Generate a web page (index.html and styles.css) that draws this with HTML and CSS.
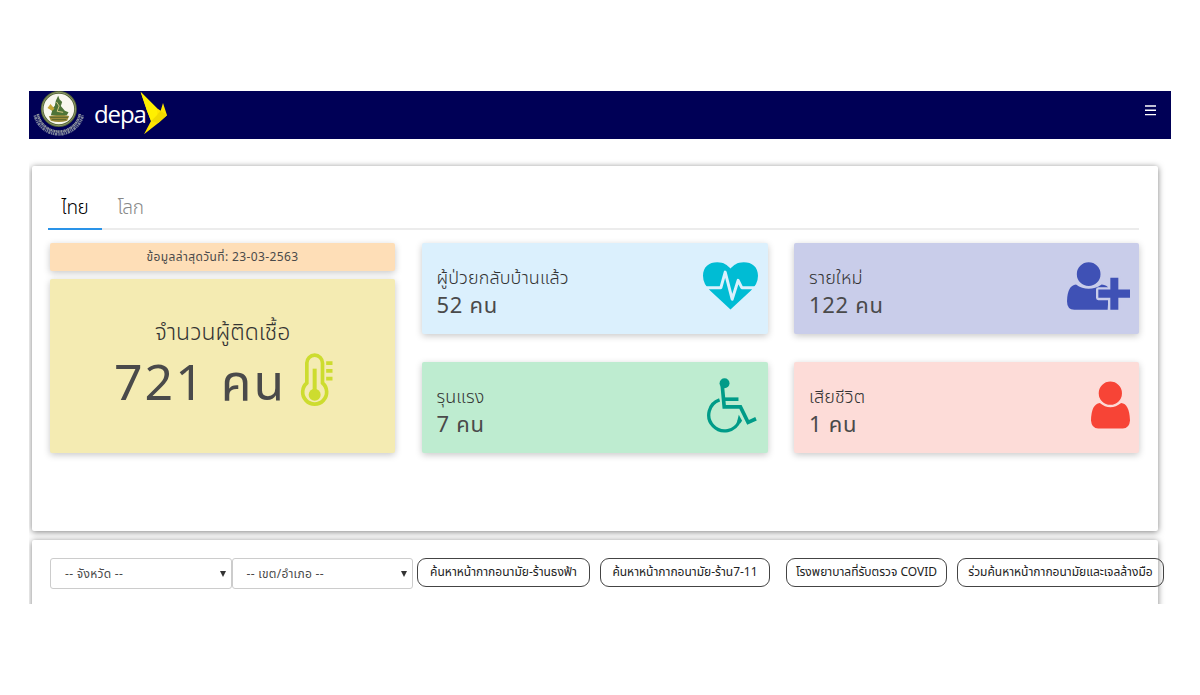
FILE: index.html
```
<!DOCTYPE html>
<html lang="th">
<head>
<meta charset="utf-8">
<title>depa</title>
<link rel="stylesheet" href="styles.css">
</head>
<body>
<div class="screen">
  <header class="topbar">
    <svg class="seal" viewBox="36 33 158 138">
      <path d="M44 106A74 74 0 0 0 188 106" fill="none" stroke="#7d859c" stroke-width="8" stroke-dasharray="4 2 7 2 3 2"/>
      <path d="M53 102A64 64 0 0 0 179 102" fill="none" stroke="#8f969d" stroke-width="8" stroke-dasharray="5 1.500 3 1"/>
      <circle cx="116" cy="87" r="50" fill="#f8f7ee" stroke="#566538" stroke-width="8"/>
      <circle cx="116" cy="87" r="50" fill="none" stroke="#a9b384" stroke-width="2"/>
      <path d="M86 109Q115 100 147 108L141 122Q116 130 92 122Z" fill="#9c8c3b"/>
      <path d="M114 47L118 58 126 66 122 78 134 92 145 97 140 106H92L96 92 84 82 98 84 104 77 107 62Z" fill="#4e7438"/>
      <path d="M82 84L91 72 103 86 96 92Z" fill="#c4a635"/>
      <path d="M109 66L117 78 111 94 129 97" fill="none" stroke="#d4ca83" stroke-width="3"/>
      <path d="M90 112H144M95 119H138" stroke="#59662e" stroke-width="3"/>
    </svg>
    <span class="brand">depa</span>
    <svg class="bird" viewBox="358 33 84 132">
      <path d="M360 36L408 84 420 92 427 69 439 106 413 129 370 163 391 123 379 92Z" fill="#ffe500"/>
      <path d="M391 123L420 92 439 106 413 129Z" fill="#f0da00"/>
      <path d="M360 36L408 84 410 104 391 123 379 92Z" fill="#fff000"/>
    </svg>
    <svg class="menu" viewBox="0 0 11 11"><path d="M0 1H11M0 5.3H11M0 9.6H11" stroke="#fff" stroke-width="1.4"/></svg>
  </header>

  <main>
    <section class="panel stats">
      <nav class="tabs">
        <a class="tab active"><span>ไทย</span></a>
        <a class="tab"><span>โลก</span></a>
      </nav>
      <div class="grid">
        <div class="total-col">
          <div class="card date">ข้อมูลล่าสุดวันที่: 23-03-2563</div>
          <div class="card total">
            <div class="total-label">จำนวนผู้ติดเชื้อ</div>
            <div class="total-row">
              <span>721 คน</span>
              <svg class="thermo" viewBox="780 160 98 168" fill="none" stroke="#cddc2f">
                <path d="M800 250V190A23.500 23.500 0 0 1 847 190V250A36 36 0 1 1 800 250Z" stroke-width="11"/>
                <path d="M823.500 207V285" stroke-width="12"/>
                <circle cx="823.500" cy="285" r="18" fill="#cddc2f" stroke="none"/>
                <path d="M858 190.500H877M858 213.500H877M858 237H877" stroke-width="11"/>
              </svg>
            </div>
          </div>
        </div>
        <div class="card home">
          <div class="info"><div class="name">ผู้ป่วยกลับบ้านแล้ว</div><div class="count">52 คน</div></div>
          <svg class="i-heart" viewBox="878 82 166 144">
            <path d="M961 225L900 168Q878 148 878 123C878 96 896 82 921 82C942 82 951 91 961 101C971 91 980 82 1001 82C1026 82 1044 96 1044 123Q1044 148 1022 168Z" fill="#00bcd4"/>
            <path d="M878 159H932L945 112 966 194 984 137 995 159H1044" fill="none" stroke="#dbf0fd" stroke-width="9" stroke-linejoin="round"/>
          </svg>
        </div>
        <div class="card new">
          <div class="info"><div class="name">รายใหม่</div><div class="count">122 คน</div></div>
          <svg class="i-plus" viewBox="846 82 189 143">
            <path d="M873 149Q891 162 911 162T950 149Q966 150 972 162L968 225H868Q846 224 846 199Q847 152 873 149Z" fill="#3f51b5"/>
            <circle cx="911" cy="118" r="38" fill="#3f51b5" stroke="#c9cdea" stroke-width="5"/>
            <path d="M976 129H1000V164H1035V189H1000V225H976V189H940V164H976Z" fill="#3f51b5" stroke="#c9cdea" stroke-width="14" stroke-linejoin="round"/>
            <path d="M976 129H1000V164H1035V189H1000V225H976V189H940V164H976Z" fill="#3f51b5"/>
          </svg>
        </div>
        <div class="card severe">
          <div class="info"><div class="name">รุนแรง</div><div class="count">7 คน</div></div>
          <svg class="i-wheel" viewBox="890 84 151 164">
            <circle cx="943" cy="99" r="15" fill="#009b88"/>
            <path d="M936 105L942 170H991L1014 217 1038 206" fill="none" stroke="#009b88" stroke-width="11"/>
            <path d="M942 147H985" stroke="#009b88" stroke-width="11"/>
            <path d="M928 149A48 48 0 1 0 988 212" fill="none" stroke="#009b88" stroke-width="10"/>
            <path d="M986 194L996 212 990 220 981 214Z" fill="#009b88"/>
          </svg>
        </div>
        <div class="card death">
          <div class="info"><div class="name">เสียชีวิต</div><div class="count">1 คน</div></div>
          <svg class="i-user" viewBox="917 93 119 144">
            <path d="M944 159Q959 172 976 172T1009 159Q1034 161 1036 212Q1034 236 1014 237H939Q919 236 917 212Q918 162 944 159Z" fill="#f74436"/>
            <circle cx="976" cy="129" r="37.500" fill="#f74436" stroke="#fddcd8" stroke-width="4"/>
          </svg>
        </div>
      </div>
    </section>

    <section class="panel filters">
      <div class="select"><span>-- จังหวัด --</span><i class="caret"></i></div>
      <div class="select"><span>-- เขต/อำเภอ --</span><i class="caret"></i></div>
      <a class="btn b1">ค้นหาหน้ากากอนามัย-ร้านธงฟ้า</a>
      <a class="btn b2">ค้นหาหน้ากากอนามัย-ร้าน7-11</a>
      <a class="btn b3">โรงพยาบาลที่รับตรวจ COVID</a>
      <a class="btn b4">ร่วมค้นหาหน้ากากอนามัยและเจลล้างมือ</a>
    </section>
  </main>
</div>
</body>
</html>
```
FILE: styles.css
```
* { box-sizing: border-box; }
body {
  margin: 0;
  padding: 91px 29px 0;
  background: #fff;
  font-family: "Noto Sans", "Noto Sans Thai", sans-serif;
  color: #4a4a4a;
}
.screen { height: 513px; overflow: hidden; }
.topbar { display: flex; height: 48px; background: #000056; }
.seal { width: 53px; height: 46px; margin-left: 3px; }
.brand {
  width: 52px;
  margin-left: 9px;
  font: 400 24px/46px "Open Sans", sans-serif;
  letter-spacing: -1.1px;
  color: #fff;
}
.bird { width: 28px; height: 44px; margin-left: -6px; }
.menu { width: 11px; height: 11px; margin: 14px 15px 0 auto; }
main { display: flex; flex-direction: column; gap: 9px; padding: 27px 13px 0 3px; }
.panel { background: #fff; border-radius: 2px; box-shadow: 0 1px 6px rgba(0,0,0,.5); }
.stats { height: 365px; padding: 20px 19px 0 18px; }
.tabs { display: flex; height: 44px; margin-left: -2px; border-bottom: 2px solid #ececec; }
.tab { display: flex; justify-content: center; width: 54px; height: 44px; font-size: 19px; font-weight: 300; line-height: 43px; letter-spacing: -.4px; color: #888; }
.tab + .tab { width: 57px; }
.tab.active { color: #000; border-bottom: 2px solid #2a93e8; }
.grid {
  display: grid;
  grid-template-columns: 345px 346px 345px;
  grid-template-rows: 91px 91px;
  gap: 28px 26.500px;
  margin-top: 13px;
}
.total-col { grid-row: 1 / 3; display: flex; flex-direction: column; gap: 8px; }
.card { border-radius: 2px; box-shadow: 0 2px 7px rgba(0,0,0,.22); white-space: nowrap; }
.date { height: 28px; background: #fedeb7; text-align: center; font-size: 12px; line-height: 27px; letter-spacing: .38px; }
.total { flex: 1; padding-top: 35px; background: #f4ebb2; text-align: center; }
.total-label { font-size: 23px; font-weight: 300; line-height: 34px; color: #333; }
.total-row { display: flex; align-items: flex-start; gap: 14px; padding-left: 64px; font-size: 50px; line-height: 67px; letter-spacing: 2px; }
.thermo { width: 33px; height: 56px; margin-top: 5px; }
.home, .new, .severe, .death { display: flex; justify-content: space-between; padding-left: 15px; }
.home { background: #dbf0fd; }
.new { background: #c9cdea; }
.severe { background: #beecd0; }
.death { background: #fddcd8; }
.info { padding-top: 21px; }
.name { font-size: 18px; font-weight: 300; line-height: 27px; letter-spacing: .1px; color: #333; }
.count { font-size: 22px; line-height: 26px; letter-spacing: .7px; }
.i-heart { width: 55px; height: 48px; margin: 19px 10px 0 0; }
.i-plus { width: 63px; height: 48px; margin: 19px 9px 0 0; }
.i-wheel { width: 50px; height: 55px; margin: 16px 11px 0 0; }
.i-user { width: 39px; height: 48px; margin: 19px 9px 0 0; }
.filters { display: flex; align-items: flex-start; height: 90px; padding: 18px 0 0 18px; white-space: nowrap; }
.select {
  display: flex;
  flex: none;
  justify-content: space-between;
  align-items: center;
  width: 181.500px;
  height: 31px;
  padding: 0 5px 0 14px;
  border: 1.500px solid #ccc;
  border-radius: 3px;
  font-size: 12px;
  letter-spacing: .3px;
}
.caret { border: 3px solid transparent; border-top: 6px solid #333; border-bottom: 0; }
.btn {
  display: flex;
  flex: none;
  justify-content: center;
  height: 29px;
  border: 1.500px solid #444;
  border-radius: 9px;
  font-size: 12px;
  line-height: 25px;
  color: #222;
}
.b1 { width: 173px; margin-left: 4px; }
.b2 { width: 170px; margin-left: 10px; }
.b3 { width: 161px; margin-left: 16px; }
.b4 { width: 207px; margin-left: 10px; }
```
